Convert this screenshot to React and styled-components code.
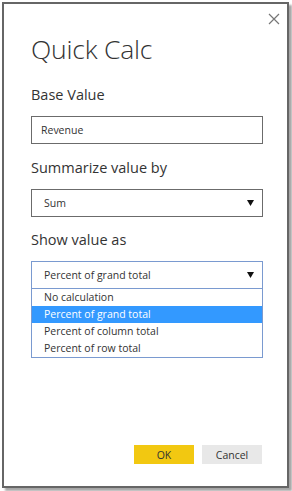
import React from "react";
import styled, { createGlobalStyle } from "styled-components";

const Global = createGlobalStyle`
  html, body { margin: 0; padding: 0; background: #fff; }
  body { font-family: "Open Sans", "Noto Sans", sans-serif; color: #333; }
`;

const Page = styled.div`
  width: 292px;
  height: 491px;
  padding: 2px 0 0 2px;
  box-sizing: border-box;
`;

const Dialog = styled.div`
  position: relative;
  width: 287px;
  height: 486px;
  box-sizing: border-box;
  border: 2px solid #666;
  background: #fff;
  box-shadow: 3px 3px 2px rgba(0, 0, 0, 0.35);
  padding: 0 25px 0 27px;
  display: flex;
  flex-direction: column;
`;

const Close = styled.button`
  position: absolute;
  top: 8px;
  right: 6px;
  width: 14px;
  height: 14px;
  padding: 0;
  border: 0;
  background: none;
  display: flex;
`;

const Title = styled.h1`
  margin: 28px 0 0 0;
  font-family: "Open Sans", sans-serif;
  font-weight: 300;
  font-size: 26.5px;
  line-height: 34px;
  color: #333;
  letter-spacing: -0.2px;
`;

const Label = styled.div`
  font-size: 14.5px;
  line-height: 20px;
  color: #333;
  margin-top: ${(p) => p.$mt}px;
`;

const Field = styled.div`
  box-sizing: border-box;
  width: 232px;
  height: 28px;
  margin-top: ${(p) => p.$mt}px;
  border: 1px solid ${(p) => (p.$open ? "#7a9ad0" : "#6b6b6b")};
  display: flex;
  align-items: center;
  justify-content: space-between;
  padding: 0 8px 0 ${(p) => p.$pl}px;
  font-size: 10.5px;
  color: #333;
`;

const Arrow = styled.svg`
  width: 7px;
  height: 6px;
`;

const List = styled.ul`
  list-style: none;
  margin: 0;
  padding: 0;
  width: 232px;
  box-sizing: border-box;
  border: 1px solid #7a9ad0;
  border-top: 0;
`;

const Item = styled.li`
  height: 17px;
  line-height: 17px;
  padding-left: 12px;
  font-size: 10.5px;
  color: ${(p) => (p.$active ? "#fff" : "#333")};
  background: ${(p) => (p.$active ? "#3399ff" : "transparent")};
`;

const Footer = styled.div`
  margin-top: auto;
  margin-bottom: 22px;
  display: flex;
  justify-content: flex-end;
  gap: 8px;
`;

const Button = styled.button`
  width: 60px;
  height: 19px;
  border: 0;
  padding: 0;
  font-family: "Open Sans", sans-serif;
  font-size: 10.5px;
  color: #333;
  background: ${(p) => (p.$primary ? "#f2c811" : "#e8e8e8")};
`;

const DownArrow = () => (
  <Arrow viewBox="0 0 7 6">
    <path d="M0 0 H7 L3.5 6 Z" fill="#111" />
  </Arrow>
);

export default function App() {
  const options = [
    "No calculation",
    "Percent of grand total",
    "Percent of column total",
    "Percent of row total",
  ];
  return (
    <Page>
      <Global />
      <Dialog>
        <Close aria-label="Close">
          <svg width="14" height="14" viewBox="0 0 14 14">
            <path d="M2 2 L12 12 M12 2 L2 12" stroke="#777" strokeWidth="1.2" />
          </svg>
        </Close>
        <Title>Quick Calc</Title>
        <Label $mt={19}>Base Value</Label>
        <Field $mt={11} $pl={9}>Revenue</Field>
        <Label $mt={14}>Summarize value by</Label>
        <Field $mt={11} $pl={12}>
          <span>Sum</span>
          <DownArrow />
        </Field>
        <Label $mt={13}>Show value as</Label>
        <Field $mt={11} $pl={12} $open>
          <span>Percent of grand total</span>
          <DownArrow />
        </Field>
        <List>
          {options.map((o) => (
            <Item key={o} $active={o === "Percent of grand total"}>
              {o}
            </Item>
          ))}
        </List>
        <Footer>
          <Button $primary>OK</Button>
          <Button>Cancel</Button>
        </Footer>
      </Dialog>
    </Page>
  );
}
